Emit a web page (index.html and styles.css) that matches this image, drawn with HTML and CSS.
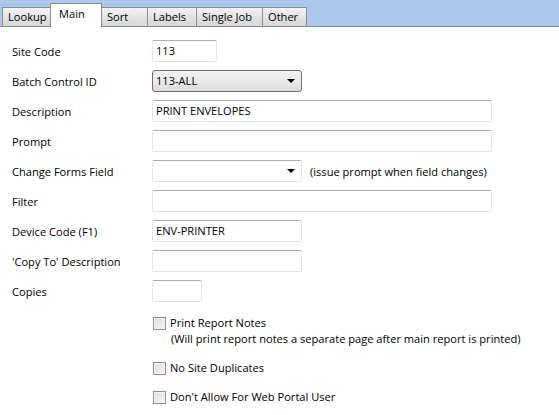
FILE: index.html
```html
<!DOCTYPE html>
<html>
<head>
<meta charset="utf-8">
<link rel="stylesheet" href="styles.css">
</head>
<body>
<div class="tabstrip">
  <div class="tab t-lookup">Lookup</div>
  <div class="tab active t-main">Main</div>
  <div class="tab t-sort">Sort</div>
  <div class="tab t-labels">Labels</div>
  <div class="tab t-single">Single Job</div>
  <div class="tab t-other">Other</div>
</div>
<div class="form">
  <div class="row"><div class="label">Site Code</div><div class="input w65">113</div></div>
  <div class="row"><div class="label">Batch Control ID</div><div class="select dark w150">113-ALL<span class="arrow"></span></div></div>
  <div class="row"><div class="label">Description</div><div class="input w340">PRINT ENVELOPES</div></div>
  <div class="row"><div class="label">Prompt</div><div class="input w340"></div></div>
  <div class="row"><div class="label">Change Forms Field</div><div class="select w150"><span class="arrow"></span></div><div class="hint">(issue prompt when field changes)</div></div>
  <div class="row"><div class="label">Filter</div><div class="input w340"></div></div>
  <div class="row"><div class="label">Device Code (F1)</div><div class="input w150">ENV-PRINTER</div></div>
  <div class="row"><div class="label">'Copy To' Description</div><div class="input w150"></div></div>
  <div class="row"><div class="label">Copies</div><div class="input w50"></div></div>
  <div class="checks">
    <div class="check first"><span class="box"></span><div><div>Print Report Notes</div><div class="note">(Will print report notes a separate page after main report is printed)</div></div></div>
    <div class="check"><span class="box"></span><div>No Site Duplicates</div></div>
    <div class="check"><span class="box"></span><div>Don't Allow For Web Portal User</div></div>
  </div>
</div>
</body>
</html>
```
FILE: styles.css
```css
html, body {
  margin: 0;
  padding: 0;
  background: #ffffff;
  font-family: "Open Sans", "Noto Sans", sans-serif;
  font-size: 11.1px;
  color: #000;
}
.tabstrip {
  height: 27px;
  background: #abc7ec;
  display: flex;
  align-items: flex-end;
  padding-left: 2px;
  box-sizing: border-box;
  border-bottom: 1px solid #8c8e94;
}
.tab {
  height: 19px;
  box-sizing: border-box;
  border: 1px solid #8c8e94;
  border-bottom: none;
  margin-right: -1px;
  padding: 0 0 0 5px;
  line-height: 18px;
  background: linear-gradient(#f3f3f3, #e4e4e4 50%, #d6d6d6);
  position: relative;
}
.t-lookup { width: 49px; }
.t-main { width: 52px; }
.t-sort { width: 47px; }
.t-labels { width: 50px; }
.t-single { width: 67px; }
.t-other { width: 45px; }
.tab.active {
  height: 24px;
  margin-bottom: -1px;
  background: #ffffff;
  line-height: 20px;
  padding-left: 8px;
  z-index: 1;
}
.form {
  padding: 13px 0 0 12px;
}
.row {
  display: flex;
  align-items: center;
  height: 22px;
  margin-bottom: 8px;
}
.label {
  width: 140px;
  flex: none;
}
.input, .select {
  height: 22px;
  box-sizing: border-box;
  border: 1px solid #e2e6ec;
  border-top-color: #abadb3;
  border-radius: 2px;
  padding: 0 3px;
  line-height: 19px;
  position: relative;
  background: #fff;
}
.w65 { width: 65px; }
.w50 { width: 50px; }
.w150 { width: 150px; }
.w340 { width: 340px; }
.select.dark {
  border: 1px solid #707070;
  border-radius: 3px;
  background: linear-gradient(#f2f2f2, #ebebeb 50%, #dddddd);
}
.arrow {
  position: absolute;
  right: 6px;
  top: 8px;
  width: 0;
  height: 0;
  border-left: 4px solid transparent;
  border-right: 4px solid transparent;
  border-top: 4px solid #000;
}
.hint {
  margin-left: 8px;
}
.checks {
  padding-left: 141px;
  padding-top: 5px;
}
.check {
  display: flex;
  align-items: flex-start;
  margin-bottom: 13px;
  line-height: 16px;
}
.box {
  width: 13px;
  height: 13px;
  box-sizing: border-box;
  border: 1px solid #8f8f8f;
  background: linear-gradient(135deg, #dcdcdc, #f6f6f6);
  box-shadow: inset 0 0 0 1px #f4f4f4;
  margin: 2px 4px 0 0;
  flex: none;
}
.note {
  margin-left: 1px;
}
```
